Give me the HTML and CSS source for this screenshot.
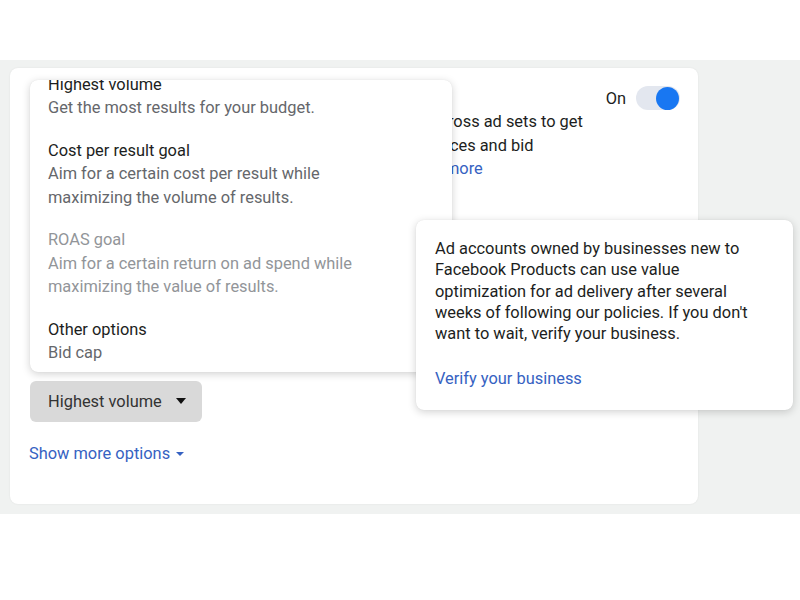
FILE: index.html
```html
<!DOCTYPE html>
<html lang="en">
<head>
  <meta charset="UTF-8" />
  <meta name="viewport" content="width=device-width, initial-scale=1.0" />
  <title>Campaign bid strategy</title>
  <link rel="stylesheet" href="styles.css">
</head>
<body>
  <div class="band">
    <div class="card">
      <div class="card-head">
        <span class="card-title">Campaign budget optimization</span>
        <span class="switch-label">On</span>
        <span class="switch on"><span class="knob"></span></span>
      </div>
      <p class="card-desc">
        Campaign budget optimization will allocate the budget across ad sets to get<br>
        more results depending on your delivery optimization choices and bid<br>
        strategy. You can control spending on each ad set. <a href="#">Learn more</a>
      </p>

      <div class="section">
        <div class="label">Campaign budget</div>
        <div class="input">$20.00</div>
      </div>

      <div class="section bid">
        <div class="label">Campaign bid strategy</div>
        <div class="help">Choose how to bid in auctions.</div>
      </div>

      <button class="select">Highest volume <span class="caret"></span></button>
      <a class="more" href="#">Show more options <span class="caret small"></span></a>

      <div class="menu">
        <div class="menu-inner">
          <div class="option">
            <div class="opt-title">Highest volume</div>
            <div class="opt-desc">Get the most results for your budget.</div>
          </div>
          <div class="option">
            <div class="opt-title">Cost per result goal</div>
            <div class="opt-desc">Aim for a certain cost per result while<br>maximizing the volume of results.</div>
          </div>
          <div class="option disabled">
            <div class="opt-title">ROAS goal</div>
            <div class="opt-desc">Aim for a certain return on ad spend while<br>maximizing the value of results.</div>
          </div>
          <div class="option">
            <div class="opt-title">Other options</div>
            <div class="opt-desc">Bid cap</div>
          </div>
        </div>
      </div>

      <div class="tooltip">
        <p>Ad accounts owned by businesses new to<br>Facebook Products can use value<br>optimization for ad delivery after several<br>weeks of following our policies. If you don't<br>want to wait, verify your business.</p>
        <a href="#">Verify your business</a>
      </div>
    </div>
  </div>
</body>
</html>
```

FILE: styles.css
```css
html, body {
  margin: 0;
  padding: 0;
  background: #fff;
  font-family: Roboto, 'Liberation Sans', sans-serif;
  color: #1c1e21;
}

.band {
  margin-top: 60px;
  padding: 8px 10px 10px;
  background: #f0f2f1;
}

.card {
  position: relative;
  width: 688px;
  box-sizing: border-box;
  padding: 18px 18px 39px 20px;
  background: #fff;
  border-radius: 8px;
  box-shadow: 0 0 2px rgba(0, 0, 0, 0.08);
}

a {
  color: #3662c2;
  text-decoration: none;
}

.card-head {
  display: flex;
  align-items: center;
  height: 24px;
  font-size: 16.4px;
}

.card-title {
  flex: 1;
  font-weight: bold;
}

.switch-label {
  margin-right: 10px;
}

.switch {
  display: flex;
  justify-content: flex-end;
  align-items: center;
  width: 44px;
  height: 24px;
  box-sizing: border-box;
  padding: 0 1px;
  border-radius: 12px;
  background: #e3e7ef;
}

.knob {
  width: 23px;
  height: 23px;
  border-radius: 50%;
  background: #1877f2;
}

.card-desc {
  margin: 0;
  font-size: 16.4px;
  line-height: 23.5px;
  white-space: nowrap;
}

.section {
  margin-top: 24px;
  font-size: 16.4px;
  line-height: 23px;
}

.label {
  font-weight: bold;
}

.input {
  margin-top: 8px;
  height: 40px;
  border: 1px solid #ccd0d5;
  border-radius: 6px;
}

.bid {
  margin-top: 28px;
}

.help {
  color: #606770;
}

.select {
  display: flex;
  align-items: center;
  justify-content: space-between;
  margin-top: 29px;
  width: 172px;
  height: 41px;
  padding: 0 16px 0 18px;
  border: none;
  border-radius: 6px;
  background: #d9d9d9;
  font-family: inherit;
  font-size: 16.4px;
  color: #333;
}

.caret {
  width: 0;
  height: 0;
  border-left: 5px solid transparent;
  border-right: 5px solid transparent;
  border-top: 6px solid #111;
}

.more {
  display: inline-flex;
  align-items: center;
  gap: 6px;
  margin-top: 20px;
  margin-left: -1px;
  font-size: 16.4px;
  line-height: 23px;
}

.caret.small {
  border-left-width: 4px;
  border-right-width: 4px;
  border-top: 4px solid #3662c2;
  margin-top: 2px;
}

.menu {
  position: absolute;
  left: 20px;
  top: 12px;
  width: 422px;
  height: 292px;
  overflow: hidden;
  background: #fff;
  border-radius: 8px;
  box-shadow: 0 2px 8px rgba(0, 0, 0, 0.18), 0 0 1px rgba(0, 0, 0, 0.1);
}

.menu-inner {
  margin-top: -7px;
  padding: 0 18px;
  font-size: 16.4px;
  line-height: 23.2px;
}

.option {
  margin-bottom: 19.7px;
}

.opt-title {
  color: #1c1e21;
}

.opt-desc {
  color: #65676b;
}

.option.disabled .opt-title,
.option.disabled .opt-desc {
  color: #929599;
}

.tooltip {
  position: absolute;
  left: 406px;
  top: 152px;
  width: 377px;
  height: 190px;
  box-sizing: border-box;
  padding: 18px 19px;
  background: #fff;
  border-radius: 8px;
  box-shadow: 0 2px 8px rgba(0, 0, 0, 0.18), 0 0 1px rgba(0, 0, 0, 0.1);
  font-size: 16.4px;
  line-height: 21.3px;
}

.tooltip p {
  margin: 0 0 24px;
  color: #1c1e21;
}
```
